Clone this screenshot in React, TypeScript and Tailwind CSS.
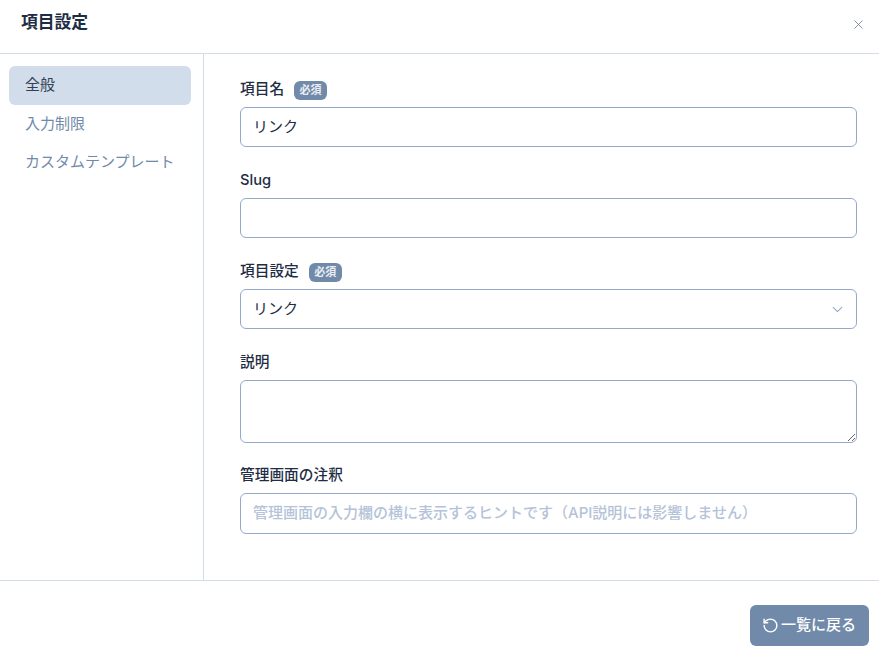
import { ChevronDown, RotateCcw, X } from 'lucide-react';

const font = "font-['Inter','Noto_Sans_CJK_JP',sans-serif]";

function RequiredBadge() {
  return (
    <span className="mt-[1px] rounded-[6px] bg-[#718aa9] px-[5.5px] py-[2px] text-[11px] leading-[15px] font-bold text-white/85">必須</span>
  );
}

function Label({ text, required }: { text: string; required?: boolean }) {
  return (
    <div className="mb-[8px] flex h-[21px] items-center gap-[10px] pt-[2px] text-[14.7px] leading-[21px] font-medium text-[#1e2d45]">
      <span>{text}</span>
      {required && <RequiredBadge />}
    </div>
  );
}

export default function App() {
  return (
    <div className={`${font} flex h-[655px] w-[879px] flex-col bg-white`}>
      <header className="flex h-[54px] shrink-0 items-start justify-between border-b border-[#d3ddea] pr-[13px] pl-[21px]">
        <h1 className="mt-[10px] text-[16.8px] leading-[24px] font-bold text-[#1e2d45]">項目設定</h1>
        <X className="mt-[17px] text-[#64748b]" size={15} strokeWidth={1.25} />
      </header>
      <div className="flex h-[527px] shrink-0 border-b border-[#d3ddea]">
        <nav className="w-[204px] shrink-0 border-r border-[#d3ddea] pt-[12px] pr-[12px] pl-[9px] text-[15px] text-[#718aa9]">
          <div className="flex h-[39px] items-center rounded-[6px] bg-[#d1ddeb] px-[16px] pb-[1px] text-[#334155]">全般</div>
          <div className="flex h-[38px] items-center px-[16px]">入力制限</div>
          <div className="flex h-[38px] items-center px-[16px]">カスタムテンプレート</div>
        </nav>
        <main className="flex flex-1 flex-col pt-[24px] pr-[22px] pl-[36px]">
          <Label text="項目名" required />
          <div className="mb-[22px] flex h-[40px] items-center rounded-[6px] border border-[#94a9c9] px-[12px] text-[15px] text-[#1e2d45]">リンク</div>
          <Label text="Slug" />
          <div className="mb-[22px] h-[40px] rounded-[6px] border border-[#94a9c9]" />
          <Label text="項目設定" required />
          <div className="mb-[22px] flex h-[40px] items-center justify-between rounded-[6px] border border-[#94a9c9] pr-[10px] pl-[12px] text-[15px] text-[#1e2d45]">
            <span>リンク</span>
            <ChevronDown size={17} strokeWidth={1.5} className="text-[#94a9c9]" />
          </div>
          <Label text="説明" />
          <textarea className="mb-[21px] block h-[63px] w-full rounded-[6px] border border-[#94a9c9] outline-none" />
          <Label text="管理画面の注釈" />
          <div className="flex h-[41px] items-center rounded-[6px] border border-[#94a9c9] px-[12px] text-[15px] font-medium text-[#b4c3d8]">
            管理画面の入力欄の横に表示するヒントです（API説明には影響しません）
          </div>
        </main>
      </div>
      <footer className="flex flex-1 items-start justify-end pt-[24px] pr-[10px]">
        <button className="flex h-[41px] w-[119px] items-center justify-center gap-[2px] rounded-[6px] bg-[#718aa9] pr-[1px] pb-[1px] text-[15px] font-medium text-white">
          <RotateCcw size={17} strokeWidth={2} />
          一覧に戻る
        </button>
      </footer>
    </div>
  );
}
